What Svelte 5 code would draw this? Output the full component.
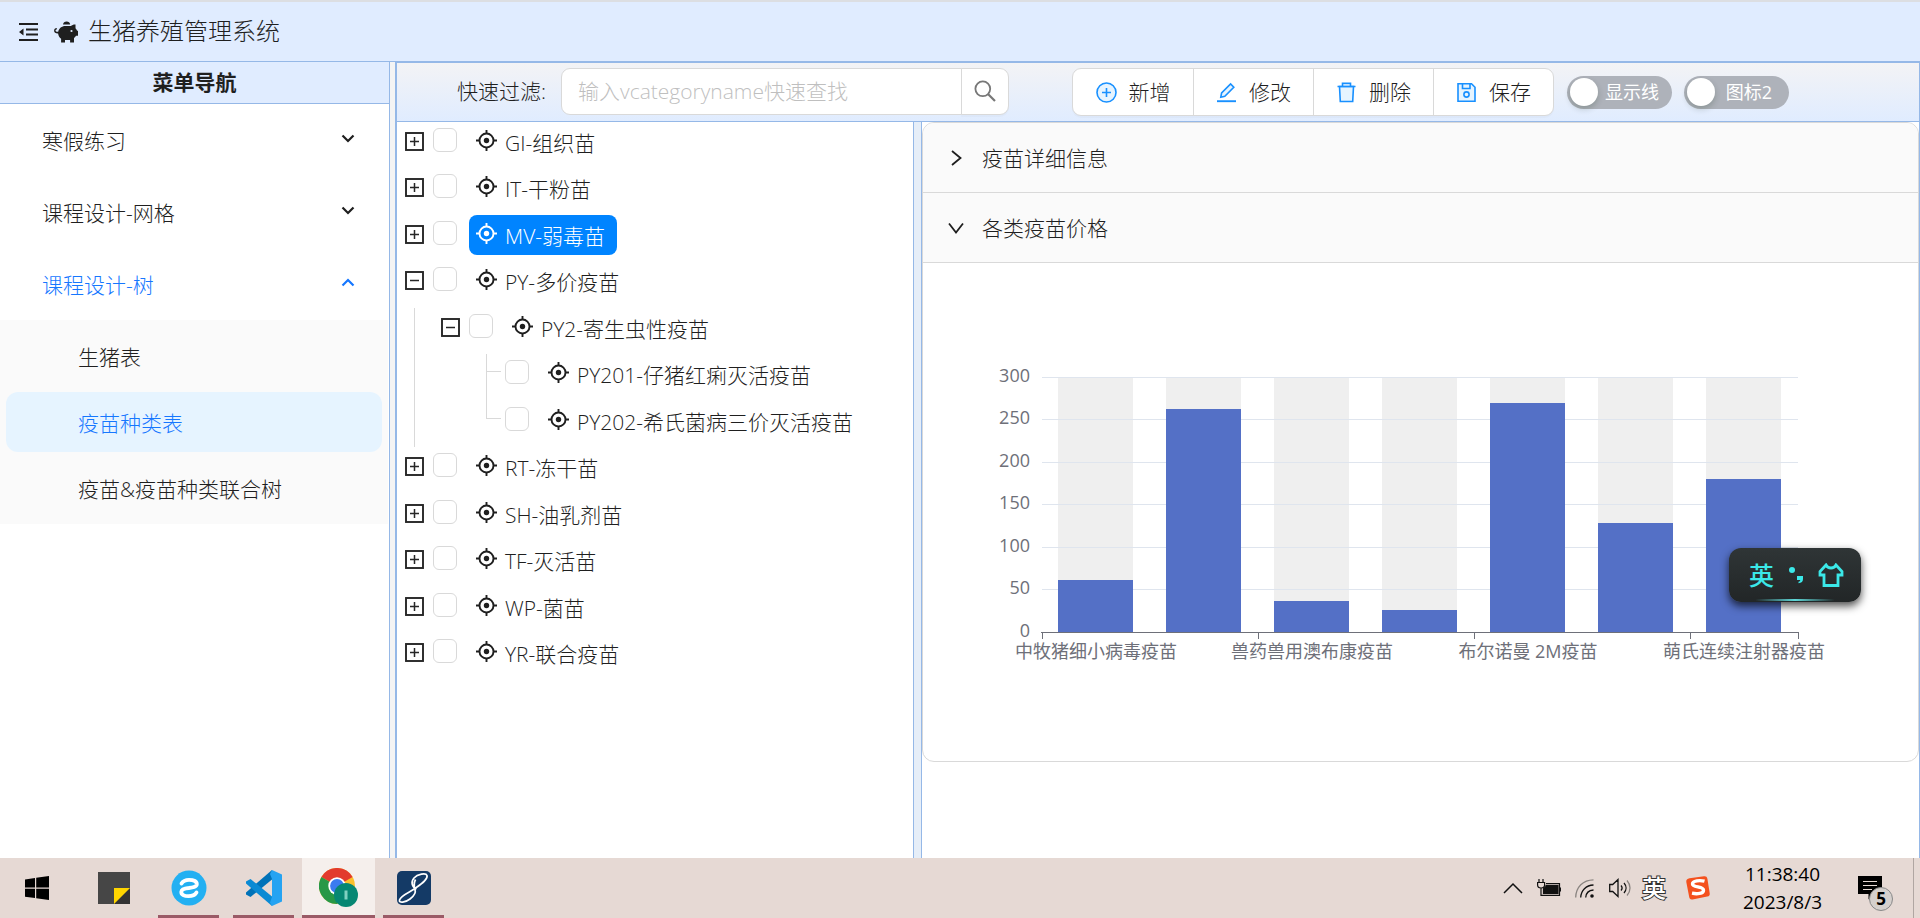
<script lang="ts">
  type TreeNode = {
    id: string;
    text: string;
    level: number;
    state: 'closed' | 'open' | 'leaf';
    last?: boolean;
  };

  const menus = [
    { id: 'm1', text: '寒假练习', open: false },
    { id: 'm2', text: '课程设计-网格', open: false },
    { id: 'm3', text: '课程设计-树', open: true },
  ];
  const subMenus = ['生猪表', '疫苗种类表', '疫苗&疫苗种类联合树'];
  let activeSub = $state('疫苗种类表');

  const nodes: TreeNode[] = [
    { id: 'GI', text: '组织苗', level: 0, state: 'closed' },
    { id: 'IT', text: '干粉苗', level: 0, state: 'closed' },
    { id: 'MV', text: '弱毒苗', level: 0, state: 'closed' },
    { id: 'PY', text: '多价疫苗', level: 0, state: 'open' },
    { id: 'PY2', text: '寄生虫性疫苗', level: 1, state: 'open' },
    { id: 'PY201', text: '仔猪红痢灭活疫苗', level: 2, state: 'leaf' },
    { id: 'PY202', text: '希氏菌病三价灭活疫苗', level: 2, state: 'leaf', last: true },
    { id: 'RT', text: '冻干苗', level: 0, state: 'closed' },
    { id: 'SH', text: '油乳剂苗', level: 0, state: 'closed' },
    { id: 'TF', text: '灭活苗', level: 0, state: 'closed' },
    { id: 'WP', text: '菌苗', level: 0, state: 'closed' },
    { id: 'YR', text: '联合疫苗', level: 0, state: 'closed' },
  ];
  let selected = $state('MV');
  let keyword = $state('');

  const actions = [
    { key: 'add', text: '新增' },
    { key: 'edit', text: '修改' },
    { key: 'delete', text: '删除' },
    { key: 'save', text: '保存' },
  ];
  const switches = ['显示线', '图标2'];

  // chart
  const values = [61, 262, 36, 25, 269, 128, 180];
  const ticks = [0, 50, 100, 150, 200, 250, 300];
  const xLabels = [
    { index: 0, text: '中牧猪细小病毒疫苗' },
    { index: 2, text: '兽药兽用澳布康疫苗' },
    { index: 4, text: '布尔诺曼 2M疫苗' },
    { index: 6, text: '萌氏连续注射器疫苗' },
  ];
  const plot = { left: 119, right: 875, top: 114, bottom: 369 };
  const step = (plot.right - plot.left) / values.length;
  const yOf = (v: number) => Math.floor(plot.bottom - (v / 300) * (plot.bottom - plot.top));
</script>

{#snippet chevron(up: boolean)}
  <svg class="chevron" viewBox="0 0 14 9" width="14" height="9">
    <path d={up ? 'M1.5 7.5 7 2l5.5 5.5' : 'M1.5 1.5 7 7l5.5-5.5'} fill="none" stroke="currentColor" stroke-width="2.2" />
  </svg>
{/snippet}

{#snippet actionIcon(key: string)}
  <svg class="action-icon" viewBox="0 0 21 21" width="21" height="21" fill="none" stroke="currentColor" stroke-width="1.6">
    {#if key === 'add'}
      <circle cx="10.5" cy="10.5" r="9.5" fill="#e6f4ff" />
      <path d="M10.5 6v9M6 10.5h9" />
    {:else if key === 'edit'}
      <path d="M1 19.2h19" stroke-width="1.9" />
      <path d="M4.8 15.2l.8-4.2 9-9 3.2 3.200-9 9z" fill="#e6f4ff" />
    {:else if key === 'delete'}
      <path d="M3.500 4.500h14l-.8 15H4.300z" fill="#e6f4ff" />
      <path d="M1.500 4.500h18M6.500 4.200V1.400h8v2.800" />
    {:else}
      <path d="M2 1.800h13.500L19 5.300v13.900H2z" fill="#e6f4ff" />
      <path d="M6.500 2v4.500h7.500V2" />
      <circle cx="10.500" cy="12.500" r="2.600" />
    {/if}
  </svg>
{/snippet}

<div class="app">
  <header class="app-header">
    <button type="button" class="icon-button" aria-label="collapse">
      <svg viewBox="0 0 20 18" width="20" height="18" fill="#1f1f1f">
        <path d="M0 0h19v2H0zM7 5.500h12v2H7zM7 10.500h12v2H7zM0 16h19v2H0zM0 9l4.500-3.500v7z" />
      </svg>
    </button>
    <svg class="pig" viewBox="0 0 24 22" width="24" height="22" fill="#1f1f1f">
      <path d="M9 3.600C9.200 1.700 10.700.5 12.600.5s3.400 1.200 3.600 3.100z" />
      <path d="M21.500 3.500v3.700c.8.8 1.300 1.600 1.600 2.500H24v5.100h-2c-.5.8-1.200 1.500-2 2.100V21.500h-3.900v-2.600H11v2.600H7.100v-3.700c-1.700-1.300-2.800-3.200-3-5.400-2.300.1-4-.8-4-2.700C.1 8 1.300 7 2.800 7.100v1.400c-.8 0-1.300.4-1.300 1.100 0 .8.900 1.300 2.700 1.200.7-3.400 3.500-5.700 7.200-5.700h5.400c1.300-1.200 2.800-1.700 4.700-1.600z" />
      <circle cx="17.500" cy="10" r="1.100" fill="#e0ecff" />
    </svg>
    <h1>生猪养殖管理系统</h1>
  </header>

  <div class="layout">
    <aside class="sidebar">
      <h2>菜单导航</h2>
      <nav>
        {#each menus as menu (menu.id)}
          <button type="button" class="menu-title" class:open={menu.open} aria-expanded={menu.open}>
            <span>{menu.text}</span>
            {@render chevron(menu.open)}
          </button>
          {#if menu.open}
            <div class="submenu">
              {#each subMenus as item}
                <button type="button" class:active={item === activeSub} onclick={() => (activeSub = item)}>{item}</button>
              {/each}
            </div>
          {/if}
        {/each}
      </nav>
    </aside>

    <main class="main">
      <div class="toolbar">
        <form class="filter" onsubmit={(e) => e.preventDefault()}>
          <label for="keyword">快速过滤:</label>
          <input id="keyword" type="text" placeholder="输入vcategoryname快速查找" bind:value={keyword} />
          <button type="submit" aria-label="search">
            <svg viewBox="0 0 22 22" width="22" height="22" fill="none" stroke="#777" stroke-width="1.8">
              <circle cx="8.800" cy="8.800" r="7.400" />
              <path d="M14 14l7 7" stroke-width="2.200" />
            </svg>
          </button>
        </form>
        <div class="actions">
          {#each actions as action (action.key)}
            <button type="button">
              {@render actionIcon(action.key)}
              <span>{action.text}</span>
            </button>
          {/each}
        </div>
        <div class="switches">
          {#each switches as text}
            <button type="button" class="switch" role="switch" aria-checked="false">
              <span class="knob"></span>
              <span class="switch-text">{text}</span>
            </button>
          {/each}
        </div>
      </div>

      <div class="content">
        <ul class="tree">
          {#each nodes as node (node.id)}
            <li class="tree-row">
              {#each Array(node.level) as _, i}
                <span class="indent" class:guide={i === 0}></span>
              {/each}
              {#if node.state === 'leaf'}
                <span class="leaf-line" class:last={node.last}></span>
              {:else}
                <button type="button" class="switcher" aria-label={node.state === 'open' ? 'fold' : 'unfold'}>
                  <svg viewBox="0 0 19 19" width="19" height="19" fill="none" stroke="#262626">
                    <rect x="1" y="1" width="17" height="17" stroke-width="1.9" />
                    <path d={node.state === 'open' ? 'M5 9.5h9' : 'M5 9.5h9M9.5 5v9'} stroke-width="1.5" />
                  </svg>
                </button>
              {/if}
              <input type="checkbox" id="check-{node.id}" aria-label={node.text} />
              <button
                type="button"
                class="node"
                class:selected={node.id === selected}
                onclick={() => (selected = node.id)}
              >
                <svg viewBox="0 0 21 21" width="21" height="21" fill="none" stroke="currentColor">
                  <circle cx="10.500" cy="10.500" r="7" stroke-width="1.9" />
                  <circle cx="10.500" cy="10.500" r="2.700" fill="currentColor" stroke="none" />
                  <path d="M10.500 0v4M10.500 17v4M0 10.500h4M17 10.500h4" stroke-width="1.9" />
                </svg>
                <span>{node.id}-{node.text}</span>
              </button>
            </li>
          {/each}
        </ul>
        <div class="splitter"></div>
        <section class="detail">
          <div class="collapse">
            <button type="button" class="collapse-header" aria-expanded="false">
              <svg viewBox="0 0 18 18" width="18" height="18"><path d="M5 2l8.500 7L5 16" /></svg>
              <span>疫苗详细信息</span>
            </button>
            <button type="button" class="collapse-header" aria-expanded="true">
              <svg viewBox="0 0 18 18" width="18" height="18"><path d="M2 4.500l7 9 7-9" /></svg>
              <span>各类疫苗价格</span>
            </button>
            <svg class="chart" viewBox="0 0 995 498">
              {#each values as _, i}
                <rect class="bar-bg" x={plot.left + i * step + 16} y={plot.top} width="75" height={plot.bottom - plot.top} />
              {/each}
              {#each ticks as tick}
                <rect class="grid-line" x={plot.left} y={yOf(tick)} width={plot.right - plot.left} height="1" />
                <text class="y-label" x="107" y={yOf(tick) + 5} text-anchor="end">{tick}</text>
              {/each}
              {#each values as value, i}
                <rect class="bar" x={plot.left + i * step + 16} y={yOf(value)} width="75" height={plot.bottom - yOf(value)} />
              {/each}
              <rect class="axis" x={plot.left - 1} y={plot.bottom} width={plot.right - plot.left + 2} height="1" />
              {#each [0, 2, 4, 6, 7] as i}
                <rect class="axis" x={plot.left + i * step} y={plot.bottom} width="1" height="7" />
              {/each}
              {#each xLabels as label}
                <text class="x-label" x={plot.left + (label.index + 0.5) * step} y="395" text-anchor="middle">{label.text}</text>
              {/each}
            </svg>
          </div>
        </section>
      </div>
    </main>
  </div>

  <div class="ime">
    <span>英</span>
    <svg viewBox="0 0 16 18" width="16" height="18">
      <circle cx="4" cy="4" r="3" />
      <path d="M9 10h6v3c0 2.500-1.500 4-4.500 4.200v-1.400c1.200-.2 1.700-.8 1.700-1.800H9z" />
    </svg>
    <svg viewBox="0 0 26 24" width="26" height="24">
      <path class="shirt" d="M8 2 2 8.500v3.500h4v10.500h14V12h4V8.500L18 2c-1 2-2.500 3-5 3S9 4 8 2z" />
    </svg>
  </div>

  <footer class="taskbar">
    <div class="tasks">
      <button type="button" class="start" aria-label="Start">
        <svg viewBox="0 0 24 24" width="24" height="24">
          <path d="M0 3.400 10 2v9.500H0zM11.200 1.800 24 0v11.500H11.200zM0 12.700h10V22L0 20.700zM11.200 12.700H24V24l-12.800-1.800z" />
        </svg>
      </button>
      <button type="button" aria-label="Sticky Notes">
        <svg viewBox="0 0 32 32" width="32" height="32">
          <path d="M0 0h32v32H0z" fill="#464646" />
          <path d="M32 16v16H16z" fill="#333" />
          <path d="M16 16h16L16 32z" fill="#ffd500" />
        </svg>
      </button>
      <button type="button" class="running" aria-label="Browser">
        <svg viewBox="0 0 36 36" width="36" height="36">
          <circle cx="18" cy="18" r="17.500" fill="#23b0f2" />
          <path d="M10.500 13.500C12 11 14.500 9.800 18 9.800c5 0 8 1.700 7.800 4.400-.3 2.800-4 3.300-8 3.800-4 .4-7.300 1.200-7.500 3.800-.2 2.800 3 4.400 7.200 4.400 3.800 0 6.500-1.200 8-3.700" fill="none" stroke="#fff" stroke-width="3.800" stroke-linecap="round" />
        </svg>
      </button>
      <button type="button" class="running" aria-label="Visual Studio Code">
        <svg viewBox="0 0 36 36" width="36" height="36">
          <path d="M26 0v9.500L4.500 27 0 24.500v-2z" fill="#0072b8" />
          <path d="M0 13.500v-2L4.500 9 26 26.500V36z" fill="#0a8ad4" />
          <path d="M26 0l10 4.500v27L26 36l-2-3.500L26 27V9l-2-5z" fill="#25a3f2" />
        </svg>
      </button>
      <button type="button" class="running current" aria-label="Chrome">
        <svg viewBox="0 0 40 40" width="40" height="40">
          <circle cx="18" cy="18" r="18" fill="#fbc02d" />
          <path d="M18 18 2.400 9A18 18 0 0 1 33.600 9z" fill="#e23a2e" />
          <path d="M18 18 2.400 9A18 18 0 0 0 18 36l8-13z" fill="#279847" />
          <circle cx="18" cy="18" r="8.700" fill="#fff" />
          <circle cx="18" cy="18" r="6.900" fill="#3a7bf0" />
          <circle cx="27" cy="27" r="12" fill="#068773" />
          <path d="M27 22.500v9" stroke="#7fd0c0" stroke-width="3" />
        </svg>
      </button>
      <button type="button" class="running" aria-label="Navicat">
        <svg viewBox="0 0 34 34" width="34" height="34">
          <rect width="34" height="34" rx="5" fill="#143a66" />
          <path d="M19.500 18C15 16 13.500 11 17 7c3.500-4 12-5.500 13-2.500 1.200 4-6.500 9-12 13C12.500 21.500 4 24 2.500 29c-1 3.500 6 2.500 10.500-1 4.500-3.400 6-6.500 5-9.500-1-3-1.500-6 .5-10" fill="none" stroke="#fff" stroke-width="1.7" />
        </svg>
      </button>
    </div>

    <div class="tray">
      <svg viewBox="0 0 20 12" width="20" height="12" fill="none" stroke="#111" stroke-width="1.5"><path d="M1 11l9-9 9 9" /></svg>
      <svg viewBox="0 0 24 18" width="24" height="18" fill="none" stroke="#111" stroke-width="1.2">
        <path d="M2 0v3M6 0v3M.6 3.500h7V6c0 2-1.500 3-3.500 3S.6 8 .6 6zM4 9v7.400h18.500V4.600H9" />
        <path d="M6.500 14.500V9.800L9 7.500v-1h12v8zM23.400 8.500v4" fill="#111" />
      </svg>
      <svg viewBox="0 0 20 19" width="20" height="19" fill="none" stroke="#111" stroke-width="1.3">
        <path d="M.7 18.500C1 8 8 1 18.500.8" stroke="#8a8480" />
        <path d="M5.700 18.500C6 11.500 11 6.200 18.500 6M10.700 18.500c.3-4 3-7.200 7.800-7.500" />
        <circle cx="17" cy="17" r="1.800" fill="#111" stroke="none" />
      </svg>
      <svg viewBox="0 0 22 20" width="22" height="20" fill="none" stroke="#111" stroke-width="1.3">
        <path d="M.7 6.500h3L9 1.500v17l-5.300-5h-3zM12 7.500c1.300 1.500 1.300 3.500 0 5M15 5c2.700 3 2.700 7 0 10" />
        <path d="M18 2.500c4 4.500 4 10.500 0 15" stroke="#8a8480" />
      </svg>
      <span class="lang">英</span>
      <svg class="sogou" viewBox="0 0 24 24" width="24" height="24">
        <path d="M3.500 2.200 18 .3c2-.2 3 .6 3.400 2.500l2.300 14.500c.3 2-.5 3-2.400 3.300L6.500 23.500c-2 .3-3-.5-3.300-2.400L.3 6C0 3.800 1.300 2.500 3.500 2.200z" fill="#f4511e" />
        <path d="M18.500 5.200C14 4 6.500 4.500 6.500 8c0 3.700 11 2.200 11 6.200 0 3.500-6.500 4-11.500 3" fill="none" stroke="#fff" stroke-width="3.4" />
      </svg>
      <div class="clock">
        <span>11:38:40</span>
        <span>2023/8/3</span>
      </div>
      <button type="button" class="notice" aria-label="notifications">
        <svg viewBox="0 0 24 24" width="24" height="24">
          <path d="M0 0h24v18h-9l-4.500 5.500V18H0z" />
          <path d="M5 5.500h14M5 9.500h14M5 13.500h9" stroke="#e6d9d4" />
        </svg>
        <span class="badge">5</span>
      </button>
      <span class="desktop-edge"></span>
    </div>
  </footer>
</div>

<style>
  :global(body) {
    margin: 0;
    background: #fff;
  }

  .app {
    position: relative;
    display: flex;
    flex-direction: column;
    min-height: 100vh;
    box-sizing: border-box;
    border-top: 2px solid #dcdee2;
    font-family: "Open Sans", "Noto Sans CJK SC", sans-serif;
    font-size: 21px;
    font-weight: 300;
    line-height: 32px;
    color: #1f1f1f;
  }

  button,
  input {
    margin: 0;
    padding: 0;
    border: 0;
    background: none;
    box-sizing: border-box;
    font: inherit;
    color: inherit;
  }

  button {
    cursor: pointer;
  }

  svg {
    display: block;
    flex: none;
  }

  h1,
  h2,
  ul {
    margin: 0;
    padding: 0;
  }

  .app-header {
    display: flex;
    align-items: center;
    height: 59px;
    padding-left: 19px;
    background: #e0ecff;
    border-bottom: 1px solid #95b8e7;
  }

  .pig {
    margin: 0 10px 0 15px;
  }

  h1 {
    padding-bottom: 2px;
    font-size: 24px;
    font-weight: 300;
  }

  .layout {
    display: flex;
    flex: 1;
    background: #f4f4f4;
  }

  .sidebar {
    width: 389px;
    flex: none;
    background: #fff;
    border-right: 1px solid #95b8e7;
  }

  h2 {
    height: 41px;
    font-family: KaiTi, "Noto Sans CJK SC", serif;
    font-size: 21px;
    font-weight: 700;
    line-height: 39px;
    text-align: center;
    background: #e0ecff;
    border-bottom: 1px solid #95b8e7;
  }

  nav {
    display: flex;
    flex-direction: column;
  }

  .menu-title {
    display: flex;
    align-items: center;
    justify-content: space-between;
    height: 60px;
    margin: 6px 0;
    padding: 2px 34px 0 42px;
  }

  .menu-title.open {
    color: #1677ff;
  }

  .chevron {
    margin-bottom: 6px;
  }

  .submenu {
    display: flex;
    flex-direction: column;
    gap: 6px;
    margin-right: 1px;
    padding: 6px;
    background: #fafafa;
  }

  .submenu button {
    height: 60px;
    padding: 2px 0 0 72px;
    border-radius: 12px;
    text-align: left;
  }

  .submenu .active {
    background: #e6f4ff;
    color: #1677ff;
  }

  .main {
    display: flex;
    flex: 1;
    flex-direction: column;
    min-width: 0;
    margin-left: 5px;
    border-left: 2px solid #95b8e7;
    border-right: 1px solid #95b8e7;
    background: #fff;
  }

  .toolbar {
    display: flex;
    align-items: center;
    height: 58px;
    padding-left: 60px;
    border-top: 1px solid #95b8e7;
    border-bottom: 1px solid #95b8e7;
    background: linear-gradient(#f3f3f5, #e0ecff);
  }

  .filter {
    display: flex;
    align-items: center;
    padding-bottom: 2px;
  }

  .filter label {
    width: 104px;
  }

  .filter input {
    width: 401px;
    height: 47px;
    padding: 0 16px;
    border: 1px solid #d9d9d9;
    border-radius: 9px 0 0 9px;
    background: #fff;
  }

  .filter input::placeholder {
    color: #bfbfbf;
    opacity: 1;
  }

  .filter button {
    display: grid;
    place-items: center;
    width: 48px;
    height: 47px;
    margin-left: -1px;
    border: 1px solid #d9d9d9;
    border-radius: 0 9px 9px 0;
    background: #fff;
    box-shadow: 0 2px 0 rgba(0, 0, 0, 0.02);
  }

  .actions {
    display: flex;
    margin-left: 63px;
    border: 1px solid #d9d9d9;
    border-radius: 9px;
    background: #fff;
    box-shadow: 0 2px 0 rgba(0, 0, 0, 0.02);
  }

  .actions button {
    display: flex;
    align-items: center;
    justify-content: center;
    gap: 12px;
    width: 120px;
    height: 46px;
  }

  .actions button + button {
    border-left: 1px solid #d9d9d9;
  }

  .action-icon {
    color: #1890ff;
  }

  .switches {
    display: flex;
    gap: 12px;
    margin-left: 13px;
  }

  .switch {
    display: flex;
    align-items: center;
    width: 105px;
    height: 33px;
    padding: 0 6px 0 3px;
    border-radius: 17px;
    background: #aeb2ba;
    color: #fff;
    font-size: 18px;
    font-weight: 400;
  }

  .switch-text {
    flex: 1;
    text-align: center;
  }

  .knob {
    width: 28px;
    height: 28px;
    border-radius: 50%;
    background: #fff;
    box-shadow: 0 3px 6px rgba(0, 35, 11, 0.2);
  }

  .content {
    display: flex;
    flex: 1;
  }

  .tree {
    width: 516px;
    flex: none;
    list-style: none;
  }

  .tree-row {
    display: flex;
    align-items: flex-start;
    height: 46px;
    padding-left: 8px;
  }

  .tree-row:nth-child(even) {
    height: 47px;
  }

  .indent {
    width: 36px;
    align-self: stretch;
  }

  .guide {
    width: 27px;
    margin-left: 9px;
    box-sizing: border-box;
    border-left: 1px solid #d9d9d9;
  }

  .leaf-line {
    display: flex;
    flex-direction: column;
    align-self: stretch;
    width: 28px;
  }

  .leaf-line::before,
  .leaf-line::after {
    content: "";
    width: 15px;
    height: 18px;
    margin-left: 9px;
    box-sizing: border-box;
    border-left: 1px solid #d9d9d9;
  }

  .leaf-line::before {
    border-bottom: 1px solid #d9d9d9;
  }

  .leaf-line::after {
    flex: 1;
  }

  .leaf-line.last::after {
    border: 0;
  }

  .switcher {
    display: flex;
    align-items: center;
    width: 28px;
    height: 38px;
  }

  .tree-row input {
    appearance: none;
    width: 24px;
    height: 24px;
    margin: 6px 12px 0 0;
    border: 1px solid #d9d9d9;
    border-radius: 6px;
    background: #fff;
  }

  .node {
    display: flex;
    gap: 8px;
    height: 40px;
    padding: 0 12px 0 7px;
    border-radius: 8px;
    line-height: 42px;
    white-space: nowrap;
  }

  .node svg {
    margin-top: 8px;
  }

  .selected {
    background: #0084ff;
    color: #fff;
  }

  .splitter {
    width: 7px;
    flex: none;
    background: #e6eef8;
    border-left: 1px solid #95b8e7;
    border-right: 1px solid #95b8e7;
  }

  .detail {
    flex: 1;
    min-width: 0;
  }

  .collapse {
    border: 1px solid #d9d9d9;
    border-radius: 12px;
    overflow: hidden;
  }

  .collapse-header {
    display: flex;
    align-items: center;
    gap: 17px;
    width: 100%;
    height: 70px;
    padding-left: 24px;
    border-bottom: 1px solid #d9d9d9;
    background: #fafafa;
  }

  .collapse-header path {
    fill: none;
    stroke: #1f1f1f;
    stroke-width: 1.8;
  }

  .chart {
    width: 100%;
  }

  .bar-bg {
    fill: #efefef;
  }

  .grid-line {
    fill: #dfe5ee;
  }

  .bar {
    fill: #5470c6;
  }

  .axis {
    fill: #6e7079;
  }

  .y-label,
  .x-label {
    fill: #6e7079;
    font-size: 18px;
    font-weight: 400;
  }

  .ime {
    position: absolute;
    right: 59px;
    bottom: 316px;
    display: flex;
    align-items: center;
    gap: 14px;
    width: 132px;
    height: 54px;
    padding: 0 17px 0 20px;
    box-sizing: border-box;
    border-radius: 12px;
    background:
      linear-gradient(90deg, transparent 20%, #5fd8d8 50%, transparent 80%) 0 51px / 100% 2px no-repeat,
      linear-gradient(#2f3536, #222627);
    box-shadow: 0 4px 8px rgba(0, 0, 0, 0.7);
    color: #3be8e8;
    font-size: 25px;
    font-weight: 500;
    fill: #3be8e8;
  }

  .shirt {
    fill: none;
    stroke: #3be8e8;
    stroke-width: 2.8;
  }

  .taskbar {
    display: flex;
    justify-content: space-between;
    height: 60px;
    background: #e6d9d4;
    color: #000;
  }

  .tasks {
    display: flex;
    gap: 2px;
  }

  .tasks button {
    display: grid;
    place-items: center;
    width: 73px;
    height: 60px;
  }

  .tasks .start {
    margin-right: 2px;
  }

  .running {
    background: linear-gradient(#9a5a66, #9a5a66) center bottom / 61px 3px no-repeat;
  }

  .current {
    background-color: #f5efec;
    background-size: 100% 3px;
  }

  .tray {
    display: flex;
    align-items: center;
  }

  .tray > svg {
    margin-right: 14px;
  }

  .lang {
    width: 24px;
    margin-left: -3px;
    color: #fff;
    font-size: 24px;
    -webkit-text-stroke: 2px #333;
    paint-order: stroke;
    font-weight: 500;
  }

  .tray > .sogou {
    margin: 0 32px 0 20px;
  }

  .clock {
    display: flex;
    flex-direction: column;
    width: 81px;
    font-size: 19px;
    font-weight: 400;
    line-height: 28px;
    text-align: center;
    white-space: nowrap;
  }

  .notice {
    position: relative;
    margin: 0 31px 0 35px;
  }

  .badge {
    position: absolute;
    left: 11px;
    top: 11px;
    width: 24px;
    height: 24px;
    box-sizing: border-box;
    border: 1px solid #888;
    border-radius: 50%;
    background: #d5d0cd;
    font-size: 17px;
    font-weight: 700;
    line-height: 22px;
    text-align: center;
  }

  .desktop-edge {
    align-self: stretch;
    width: 6px;
    border-left: 1px solid #b0a6a2;
  }
</style>
